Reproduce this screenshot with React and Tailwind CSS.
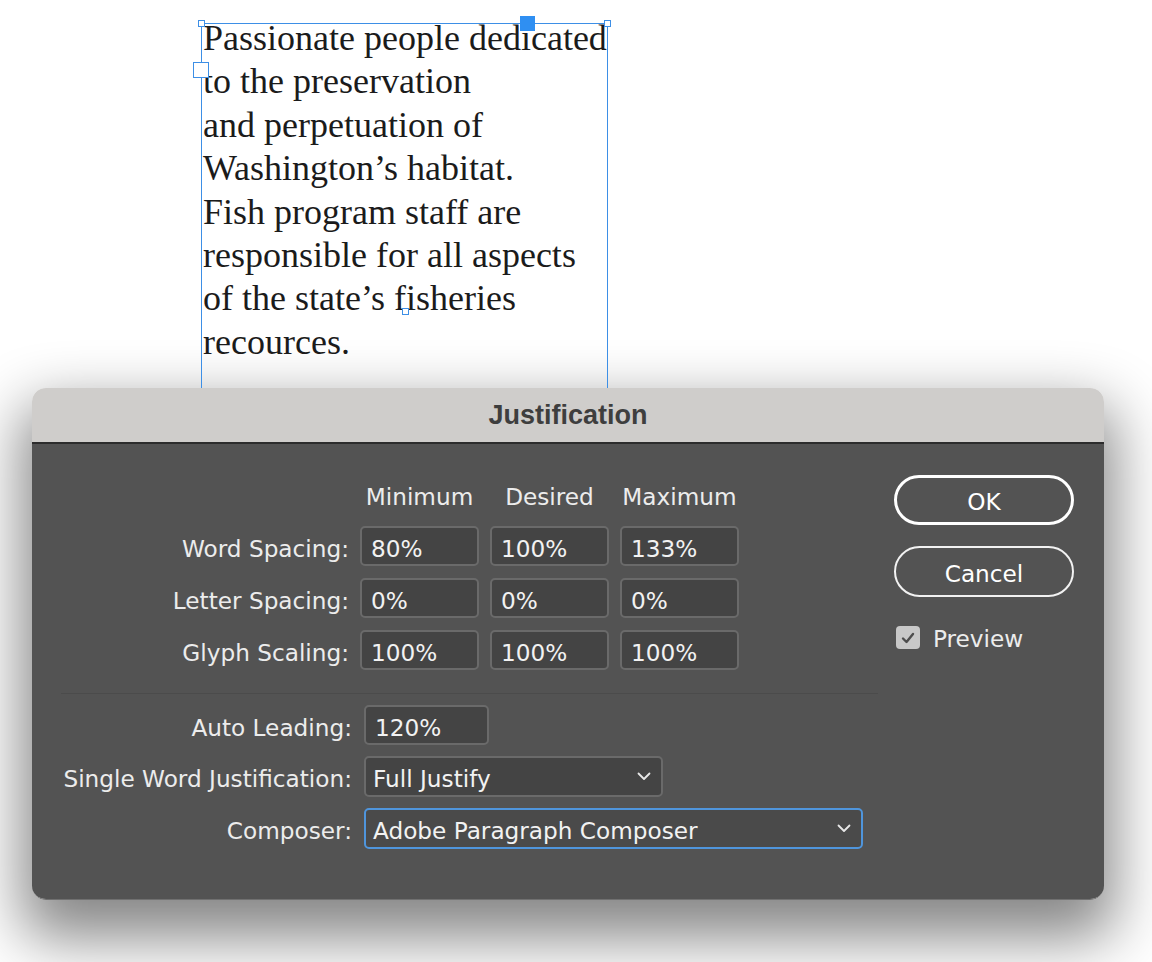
import React from "react";

// Justification 对话框 —— 仿 InDesign 的排版设置面板
const rows = [
  { label: "Word Spacing:", values: ["80%", "100%", "133%"] },
  { label: "Letter Spacing:", values: ["0%", "0%", "0%"] },
  { label: "Glyph Scaling:", values: ["100%", "100%", "100%"] },
];

const lines = [
  "Passionate people dedicated",
  "to the preservation",
  "and perpetuation of",
  "Washington’s habitat.",
  "Fish program staff are",
  "responsible for all aspects",
  "of the state’s fisheries",
  "recources.",
];

function Chevron() {
  return (
    <svg width="14" height="9" viewBox="0 0 14 9" fill="none" className="shrink-0">
      <path d="M1.5 1.5 L7 7 L12.5 1.5" stroke="#e8e8e8" strokeWidth="1.8" strokeLinecap="round" strokeLinejoin="round" />
    </svg>
  );
}

function Field({ value, className = "" }) {
  return (
    <div
      className={`h-[40px] flex items-center pl-[9px] pt-[5px] leading-[28px] bg-[#444444] border-2 border-[#6a6a6a] rounded-[5px] text-[#f2f2f2] ${className}`}
    >
      {value}
    </div>
  );
}

function Select({ value, active, className = "" }) {
  return (
    <div
      className={`h-[41px] flex items-center justify-between pl-[7px] pr-[10px] leading-[28px] rounded-[5px] text-[#f2f2f2] border-2 ${
        active ? "bg-[#4a4a4a] border-[#4f95dc]" : "bg-[#444444] border-[#6a6a6a]"
      } ${className}`}
    >
      <span className="pt-[5px]">{value}</span>
      <Chevron />
    </div>
  );
}

export default function App() {
  return (
    <div className="w-[1152px] h-[962px] bg-white overflow-hidden pt-[23px]">
      {/* 文本框 */}
      <div className="ml-[201px] w-[407px] h-[365px] border border-b-0 border-[#3d8fe6] relative">
        <div
          className="-mt-[7px] pl-[1px] text-[36px] leading-[43.4px] text-[#1b1b1b] whitespace-nowrap"
          style={{ fontFamily: '"Liberation Serif", serif' }}
        >
          {lines.map((l) => (
            <div key={l}>{l}</div>
          ))}
        </div>
        {/* 控制点 */}
        <div className="absolute -left-[4px] -top-[4px] w-[7px] h-[7px] bg-white border border-[#3d8fe6]" />
        <div className="absolute -right-[4px] -top-[4px] w-[7px] h-[7px] bg-white border border-[#3d8fe6]" />
        <div className="absolute left-[318px] -top-[8px] w-[15px] h-[15px] bg-[#2f8ff2]" />
        <div className="absolute -left-[9px] top-[38px] w-[16px] h-[16px] bg-white border border-[#3d8fe6]" />
        <div className="absolute left-[200px] top-[284px] w-[7px] h-[7px] bg-white border border-[#3d8fe6]" />
      </div>

      {/* 对话框 */}
      <div
        className="ml-[32px] w-[1072px] rounded-[14px] overflow-hidden shadow-[0_28px_60px_10px_rgba(0,0,0,0.48)] border-b border-[#707070]"
        style={{ fontFamily: '"DejaVu Sans", "Open Sans", sans-serif' }}
      >
        <div className="h-[56px] bg-[#cfcdcb] border-b-2 border-[#2c2c2c] flex items-center justify-center">
          <span
            className="text-[27px] font-bold text-[#3e3e3e]"
            style={{ fontFamily: '"Liberation Sans", Arial, sans-serif' }}
          >
            Justification
          </span>
        </div>

        <div className="bg-[#535353] flex text-[23.2px] text-[#ececec]">
          {/* 左侧表单 */}
          <div className="w-[846px] pl-[29px] pt-[41px] pb-[50px]">
            <div className="grid grid-cols-[288px_119px_119px_119px] gap-x-[11px] h-[24px] leading-[24px] mb-[17px]">
              <div />
              <div className="text-center">Minimum</div>
              <div className="text-center">Desired</div>
              <div className="text-center">Maximum</div>
            </div>
            <div className="grid grid-cols-[288px_119px_119px_119px] gap-x-[11px] gap-y-[12px] items-center">
              {rows.map((r) => (
                <React.Fragment key={r.label}>
                  <div className="text-right pt-[6px] leading-[28px]">{r.label}</div>
                  {r.values.map((v, i) => (
                    <Field key={i} value={v} />
                  ))}
                </React.Fragment>
              ))}
            </div>

            <div className="mt-[23px] h-px bg-[#4b4b4b]" />

            <div className="mt-[11px] grid grid-cols-[291px_auto] gap-x-[12px] gap-y-[11px] items-center">
              <div className="text-right pt-[5px] leading-[28px]">Auto Leading:</div>
              <Field value="120%" className="w-[125px]" />
              <div className="text-right pt-[5px] leading-[28px]">Single Word Justification:</div>
              <Select value="Full Justify" className="w-[299px]" />
              <div className="text-right pt-[5px] leading-[28px]">Composer:</div>
              <Select value="Adobe Paragraph Composer" active className="w-[499px]" />
            </div>
          </div>

          {/* 右侧按钮 */}
          <div className="ml-[16px] w-[180px] pt-[31px]">
            <div className="h-[50px] rounded-full border-[3px] border-white flex items-center justify-center pt-[4px] text-white">
              OK
            </div>
            <div className="mt-[21px] h-[51px] rounded-full border-2 border-[#f2f2f2] flex items-center justify-center pt-[5px] text-white">
              Cancel
            </div>
            <div className="mt-[29px] ml-[2px] flex items-center gap-[13px] h-[23px]">
              <div className="w-[24px] h-[23px] rounded-[4px] bg-[#c8c8c8] flex items-center justify-center">
                <svg width="14" height="12" viewBox="0 0 14 12" fill="none">
                  <path d="M2 6.5 L5.5 10 L12 2" stroke="#4d4d4d" strokeWidth="2.4" strokeLinecap="round" strokeLinejoin="round" />
                </svg>
              </div>
              <span className="pt-[4px]">Preview</span>
            </div>
          </div>
        </div>
      </div>
    </div>
  );
}
